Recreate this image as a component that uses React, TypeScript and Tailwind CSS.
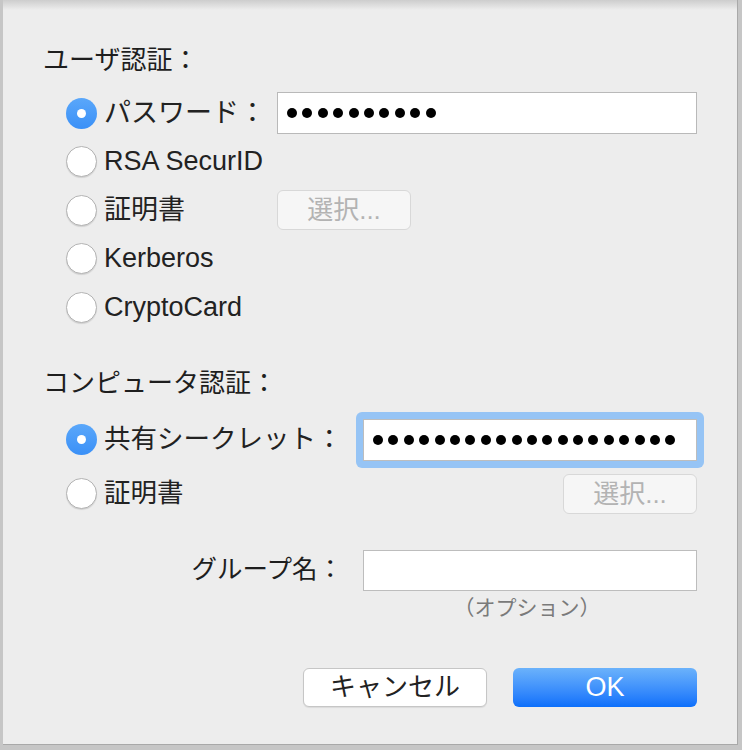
import React from 'react';

const font = '"Liberation Sans", "Noto Sans CJK JP", sans-serif';

const Radio = ({ checked }: { checked?: boolean }) =>
  checked ? (
    <span className="w-[31px] h-[31px] rounded-full bg-gradient-to-b from-[#5aa7fa] to-[#3a90f7] flex items-center justify-center shrink-0">
      <span className="w-[9px] h-[9px] rounded-full bg-white" />
    </span>
  ) : (
    <span className="w-[31px] h-[31px] rounded-full bg-white border border-[#b3b3b3] shadow-[0_1px_1px_rgba(0,0,0,0.12)] shrink-0" />
  );

const Dots = ({ count }: { count: number }) => (
  <div className="flex items-center gap-[5.4px]">
    {Array.from({ length: count }).map((_, i) => (
      <span key={i} className="w-[10px] h-[10px] rounded-full bg-black" />
    ))}
  </div>
);

const SelectButton = () => (
  <div className="w-[134px] h-[40px] rounded-[6px] bg-[#f6f6f6] border border-[#d8d8d8] flex items-center justify-center text-[26px] leading-none text-[#b3b3b3]">
    選択...
  </div>
);

const RadioRow = ({
  label,
  checked,
  children,
}: {
  label: string;
  checked?: boolean;
  children?: React.ReactNode;
}) => (
  <div className="h-[48.5px] flex items-center">
    <div className="w-[211px] flex items-center gap-[7px] shrink-0">
      <Radio checked={checked} />
      <span className="text-[27px] leading-none text-[#222]">{label}</span>
    </div>
    {children}
  </div>
);

export default function App() {
  return (
    <div className="min-h-screen bg-[#c6c6c6] flex" style={{ fontFamily: font }}>
      <div className="ml-[3px] w-[735px] h-[745px] bg-[#ededed] flex flex-col border-r border-b border-[#a9a9a9]">
        <div className="h-[10px] bg-gradient-to-b from-[#cdcdcd] to-[#ededed]" />
        <div className="pl-[40px] pr-[40px] flex flex-col">
          <h2 className="mt-[37px] h-[26px] text-[26px] leading-[26px] text-[#1e1e1e]">ユーザ認証：</h2>

          <div className="mt-[16px] pl-[23px] flex flex-col">
            <RadioRow label="パスワード：" checked>
              <div className="w-[420px] h-[42px] bg-white border border-[#b9b9b9] flex items-center pl-[9px]">
                <Dots count={10} />
              </div>
            </RadioRow>
            <RadioRow label="RSA SecurID" />
            <RadioRow label="証明書">
              <SelectButton />
            </RadioRow>
            <RadioRow label="Kerberos" />
            <RadioRow label="CryptoCard" />
          </div>

          <h2 className="mt-[38px] h-[26px] text-[26px] leading-[26px] text-[#1e1e1e]">コンピュータ認証：</h2>

          <div className="pl-[23px] flex flex-col">
            <div className="mt-[23px] h-[42px] flex items-center">
              <div className="w-[297px] flex items-center gap-[7px] shrink-0">
                <Radio checked />
                <span className="text-[26.5px] leading-none text-[#222]">共有シークレット：</span>
              </div>
              <div className="-m-[7px] p-[7px] rounded-[6px] bg-[#96c4f5]">
                <div className="w-[334px] h-[42px] bg-white border border-[#bdbdbd] flex items-center pl-[9px]">
                  <Dots count={20} />
                </div>
              </div>
            </div>
            <div className="mt-[12px] h-[42px] flex items-center justify-between">
              <div className="flex items-center gap-[7px]">
                <Radio />
                <span className="text-[26.5px] leading-none text-[#222]">証明書</span>
              </div>
              <SelectButton />
            </div>
          </div>

          <div className="mt-[35px] h-[41px] flex items-center justify-end gap-[20px]">
            <span className="text-[25.5px] leading-none text-[#1e1e1e]">グループ名：</span>
            <div className="w-[334px] h-[41px] bg-white border border-[#bdbdbd]" />
          </div>
          <div className="mt-[5px] flex justify-end">
            <div className="w-[334px] pr-[6px] text-center text-[21px] leading-[24px] text-[#7a7a7a]">（オプション）</div>
          </div>

          <div className="mt-[48px] flex justify-end gap-[26px]">
            <div className="w-[184px] h-[39px] rounded-[6px] bg-white border border-[#c6c6c6] shadow-[0_1px_1px_rgba(0,0,0,0.08)] flex items-center justify-center text-[26px] leading-none text-[#222]">
              キャンセル
            </div>
            <div className="w-[184px] h-[39px] rounded-[6px] bg-gradient-to-b from-[#6bb2fb] to-[#0b6ffb] flex items-center justify-center text-[27px] leading-none text-white">
              OK
            </div>
          </div>
        </div>
      </div>
    </div>
  );
}
